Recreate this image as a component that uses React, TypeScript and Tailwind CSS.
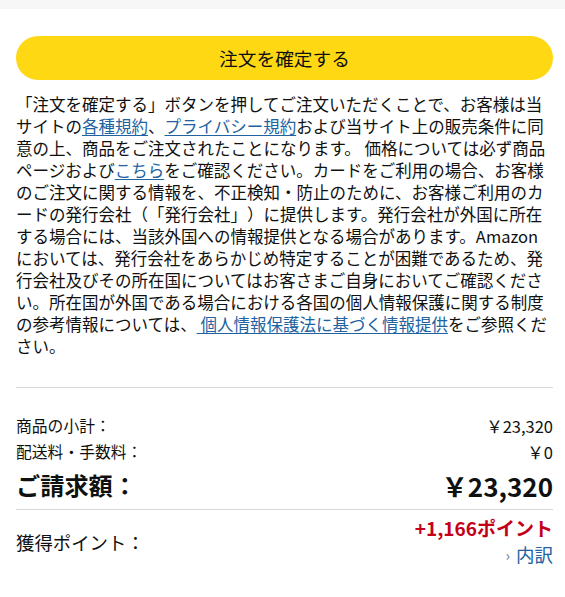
import React from 'react';

const font = { fontFamily: '"Noto Sans CJK JP", "Noto Sans", sans-serif' };

function Link({ children }: { children: React.ReactNode }) {
    return <a href="#" className="text-[#2162a1] underline underline-offset-2 decoration-1">{children}</a>;
}

export default function App() {
    return (
        <div className="w-[565px] h-[597px] bg-white text-[#0f1111] overflow-hidden [text-spacing-trim:space-all]" style={font}>
            <div className="h-[9px] bg-[#f7f7f7]" />

            <div className="pl-4 pr-3 pt-[27px]">
                {/* Place order button */}
                <button className="w-full h-[44px] rounded-full bg-[#ffd814] text-[18.7px] text-[#0f1111] flex items-center justify-center">
                    注文を確定する
                </button>

                {/* Terms */}
                <p className="mt-[13px] text-[16.5px] leading-[22px]">
                    「注文を確定する」ボタンを押してご注文いただくことで、お客様は当サイトの<Link>各種規約</Link>、<Link>プライバシー規約</Link>および当サイト上の販売条件に同意の上、商品をご注文されたことになります。 価格については必ず商品ページおよび<Link>こちら</Link>をご確認ください。カードをご利用の場合、お客様のご注文に関する情報を、不正検知・防止のために、お客様ご利用のカードの発行会社（「発行会社」）に提供します。発行会社が外国に所在する場合には、当該外国への情報提供となる場合があります。Amazonにおいては、発行会社をあらかじめ特定することが困難であるため、発行会社及びその所在国についてはお客さまご自身においてご確認ください。所在国が外国である場合における各国の個人情報保護に関する制度の参考情報については、<Link> 個人情報保護法に基づく情報提供</Link>をご参照ください。
                </p>

                <div className="mt-[30px] border-t border-[#d5d9d9]" />

                {/* Order summary */}
                <div className="pt-[25px]">
                    <div className="flex justify-between items-center h-[26px] text-[15.8px]">
                        <span>商品の小計：</span>
                        <span className="text-[16.5px]">￥23,320</span>
                    </div>
                    <div className="flex justify-between items-center h-[26px] text-[15.8px]">
                        <span>配送料・手数料：</span>
                        <span className="text-[16.5px]">￥0</span>
                    </div>
                    <div className="flex justify-between items-center h-[40px] text-[24.2px] font-bold">
                        <span>ご請求額：</span>
                        <span className="text-[26px]">￥23,320</span>
                    </div>
                </div>

                <div className="mt-[4px] border-t border-[#d5d9d9]" />

                <div className="flex justify-between items-center pt-[6px]">
                    <span className="text-[18.4px] mt-[3px]">獲得ポイント：</span>
                    <div className="flex flex-col items-end">
                        <span className="text-[19px] leading-[23px] font-bold text-[#c40018]">+1,166ポイント</span>
                        <a href="#" className="mt-[4px] text-[18.5px] leading-[23px] text-[#2162a1] flex items-center gap-[6px]">
                            <span className="text-[15px] text-[#5a7fa8]">›</span>内訳
                        </a>
                    </div>
                </div>
            </div>
        </div>
    );
}
